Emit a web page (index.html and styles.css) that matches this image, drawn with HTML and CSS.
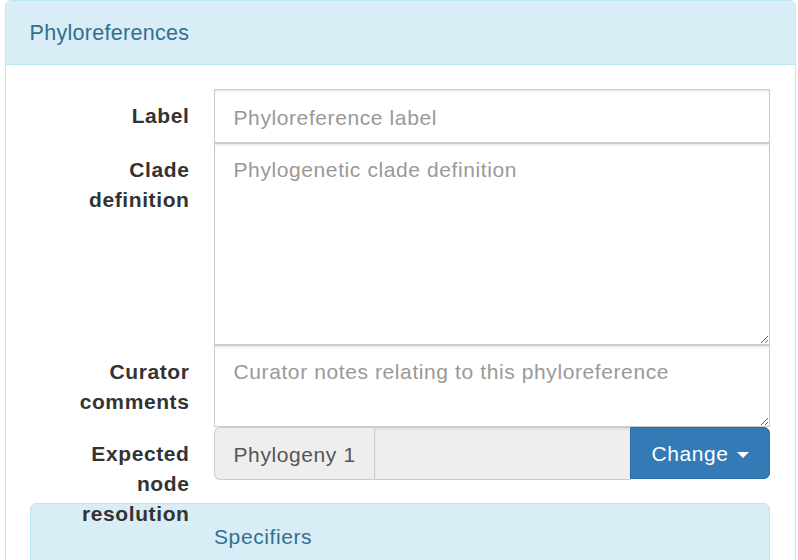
FILE: index.html
```html
<!DOCTYPE html>
<html lang="en">
<head>
<meta charset="utf-8">
<title>Phyloreferences</title>
<link rel="stylesheet" href="styles.css">
</head>
<body>
<div class="panel">
  <div class="panel-heading">
    <div class="panel-title">Phyloreferences</div>
  </div>
  <div class="panel-body">
    <form class="form">
      <div class="form-row">
        <label class="form-label" for="label">Label</label>
        <input id="label" class="form-control input-single" type="text" placeholder="Phyloreference label">
      </div>
      <div class="form-row">
        <label class="form-label" for="clade">Clade definition</label>
        <textarea id="clade" class="form-control textarea-tall" placeholder="Phylogenetic clade definition"></textarea>
      </div>
      <div class="form-row">
        <label class="form-label" for="curator">Curator comments</label>
        <textarea id="curator" class="form-control textarea-short" placeholder="Curator notes relating to this phyloreference"></textarea>
      </div>
      <div class="form-row form-row-fixed">
        <label class="form-label">Expected node resolution</label>
        <div class="input-group">
          <span class="input-addon">Phylogeny 1</span>
          <input class="form-control group-input" type="text" disabled>
          <button type="button" class="btn-primary">Change <span class="caret"></span></button>
        </div>
      </div>
    </form>
    <div class="sub-panel">
      <div class="sub-heading">Specifiers</div>
    </div>
  </div>
</div>
</body>
</html>
```

FILE: styles.css
```css
html, body {
  margin: 0;
  padding: 0;
  overflow: hidden;
  background: #fff;
}

body {
  font-family: "Liberation Sans", Arial, sans-serif;
  font-size: 21px;
  line-height: 30px;
  letter-spacing: 0.6px;
  color: #333;
}

.panel {
  margin: 0 2px 0 4.5px;
  border: 1.5px solid #bce8f1;
  border-radius: 6px 6px 0 0;
  background: #fff;
  min-height: 620px;
}

.panel-heading {
  background: #d9edf7;
  border-bottom: 1.5px solid #bce8f1;
  border-radius: 4.5px 4.5px 0 0;
  padding: 15px 24px;
}

.panel-title {
  font-size: 21.5px;
  line-height: 33px;
  letter-spacing: 0.3px;
  color: #31708f;
  padding-top: 1px;
  height: 32px;
}

.panel-body {
  padding: 24px 25px 0 24px;
}

.form-row {
  display: grid;
  grid-template-columns: 160px 1fr;
  column-gap: 24px;
  align-items: start;
}

.form-row-fixed {
  height: 53.5px;
}

.form-label {
  display: block;
  box-sizing: border-box;
  padding: 12px 0 0 20px;
  text-align: right;
  font-weight: bold;
  color: #333;
}

.form-control {
  display: block;
  box-sizing: border-box;
  width: 100%;
  margin: 0;
  padding: 11px 18px 7px 19px;
  font-family: inherit;
  font-size: 21px;
  line-height: 30px;
  letter-spacing: 0.6px;
  color: #555;
  background: #fff;
  border: 1.5px solid #ccc;
  border-radius: 0;
  box-shadow: inset 0 1.5px 1.5px rgba(0, 0, 0, 0.075);
  outline: none;
}

.form-control::placeholder {
  color: #999;
  opacity: 1;
}

.input-single {
  height: 53.5px;
}

.textarea-tall {
  height: 202px;
  resize: vertical;
}

.textarea-short {
  height: 82px;
  resize: vertical;
}

.input-group {
  display: flex;
  height: 53.5px;
}

.input-addon {
  box-sizing: border-box;
  display: flex;
  align-items: center;
  height: 53.5px;
  padding: 3px 18px 0 19px;
  background: #eee;
  border: 1.5px solid #ccc;
  border-right: 0;
  border-radius: 6px 0 0 6px;
  color: #555;
  white-space: nowrap;
}

.group-input {
  flex: 1;
  min-width: 0;
  height: 53.5px;
  background: #eee;
}

.btn-primary {
  box-sizing: border-box;
  height: 52px;
  margin-left: -1.5px;
  padding: 2px 20px 0 20.5px;
  font-family: inherit;
  font-size: 21px;
  line-height: 30px;
  letter-spacing: 0.6px;
  color: #fff;
  background: #337ab7;
  border: 1.5px solid #2e6da4;
  border-radius: 0 6px 6px 0;
  white-space: nowrap;
  cursor: pointer;
}

.caret {
  display: inline-block;
  width: 0;
  height: 0;
  margin-left: 2px;
  vertical-align: middle;
  border-top: 6px solid #fff;
  border-left: 6px solid transparent;
  border-right: 6px solid transparent;
}

.sub-panel {
  margin-top: 22.5px;
  border: 1.5px solid #bce8f1;
  border-radius: 6px 6px 0 0;
  background: #d9edf7;
  min-height: 100px;
}

.sub-heading {
  padding: 18px 18px 15px 183.5px;
  color: #31708f;
  font-size: 21px;
  line-height: 30px;
}
```
